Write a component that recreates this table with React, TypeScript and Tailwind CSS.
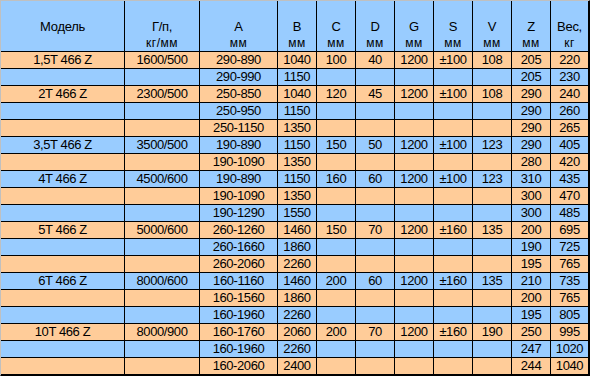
const headers: [string, string][] = [
  ['Модель', ''],
  ['Г/п,', 'кг/мм'],
  ['A', 'мм'],
  ['B', 'мм'],
  ['C', 'мм'],
  ['D', 'мм'],
  ['G', 'мм'],
  ['S', 'мм'],
  ['V', 'мм'],
  ['Z', 'мм'],
  ['Вес,', 'кг'],
];

const rows: string[][] = [
  ['1,5T 466 Z', '1600/500', '290-890', '1040', '100', '40', '1200', '±100', '108', '205', '220'],
  ['', '', '290-990', '1150', '', '', '', '', '', '205', '230'],
  ['2T 466 Z', '2300/500', '250-850', '1040', '120', '45', '1200', '±100', '108', '290', '240'],
  ['', '', '250-950', '1150', '', '', '', '', '', '290', '260'],
  ['', '', '250-1150', '1350', '', '', '', '', '', '290', '265'],
  ['3,5T 466 Z', '3500/500', '190-890', '1150', '150', '50', '1200', '±100', '123', '290', '405'],
  ['', '', '190-1090', '1350', '', '', '', '', '', '280', '420'],
  ['4T 466 Z', '4500/600', '190-890', '1150', '160', '60', '1200', '±100', '123', '310', '435'],
  ['', '', '190-1090', '1350', '', '', '', '', '', '300', '470'],
  ['', '', '190-1290', '1550', '', '', '', '', '', '300', '485'],
  ['5T 466 Z', '5000/600', '260-1260', '1460', '150', '70', '1200', '±160', '135', '200', '695'],
  ['', '', '260-1660', '1860', '', '', '', '', '', '190', '725'],
  ['', '', '260-2060', '2260', '', '', '', '', '', '195', '765'],
  ['6T 466 Z', '8000/600', '160-1160', '1460', '200', '60', '1200', '±160', '135', '210', '735'],
  ['', '', '160-1560', '1860', '', '', '', '', '', '200', '765'],
  ['', '', '160-1960', '2260', '', '', '', '', '', '195', '805'],
  ['10T 466 Z', '8000/900', '160-1760', '2060', '200', '70', '1200', '±160', '190', '250', '995'],
  ['', '', '160-1960', '2260', '', '', '', '', '', '247', '1020'],
  ['', '', '160-2060', '2400', '', '', '', '', '', '244', '1040'],
];

export default function App() {
  return (
    <div className="w-[590px] h-[376px] bg-black font-['Liberation_Sans',Arial,sans-serif] text-black">
      <div className="grid grid-cols-[124px_75px_78px_repeat(7,39px)_38px] border-t border-l border-t-[#c0c0c0] border-l-[#c0c0c0] border-r border-b border-black">
        {/* header */}
        {headers.map(([top, unit], i) => (
          <div
            key={'h' + i}
            className="h-[51px] bg-[#99ccff] border-r border-b border-black flex flex-col justify-end items-center"
          >
            <span className="text-[13px] leading-[16px] tracking-[-0.3px]">{top}</span>
            <span className="text-[12px] leading-[16px] tracking-[0.5px]">{unit || '\u00a0'}</span>
          </div>
        ))}

        {/* data rows, alternating orange / blue */}
        {rows.map((row, r) =>
          row.map((cell, c) => (
            <div
              key={r + '-' + c}
              className={
                'h-[17px] border-r border-b border-black text-center text-[13px] leading-[16px] tracking-[-0.4px] ' +
                (r % 2 === 0 ? 'bg-[#ffcc99]' : 'bg-[#99ccff]')
              }
            >
              {cell}
            </div>
          ))
        )}
      </div>
    </div>
  );
}
